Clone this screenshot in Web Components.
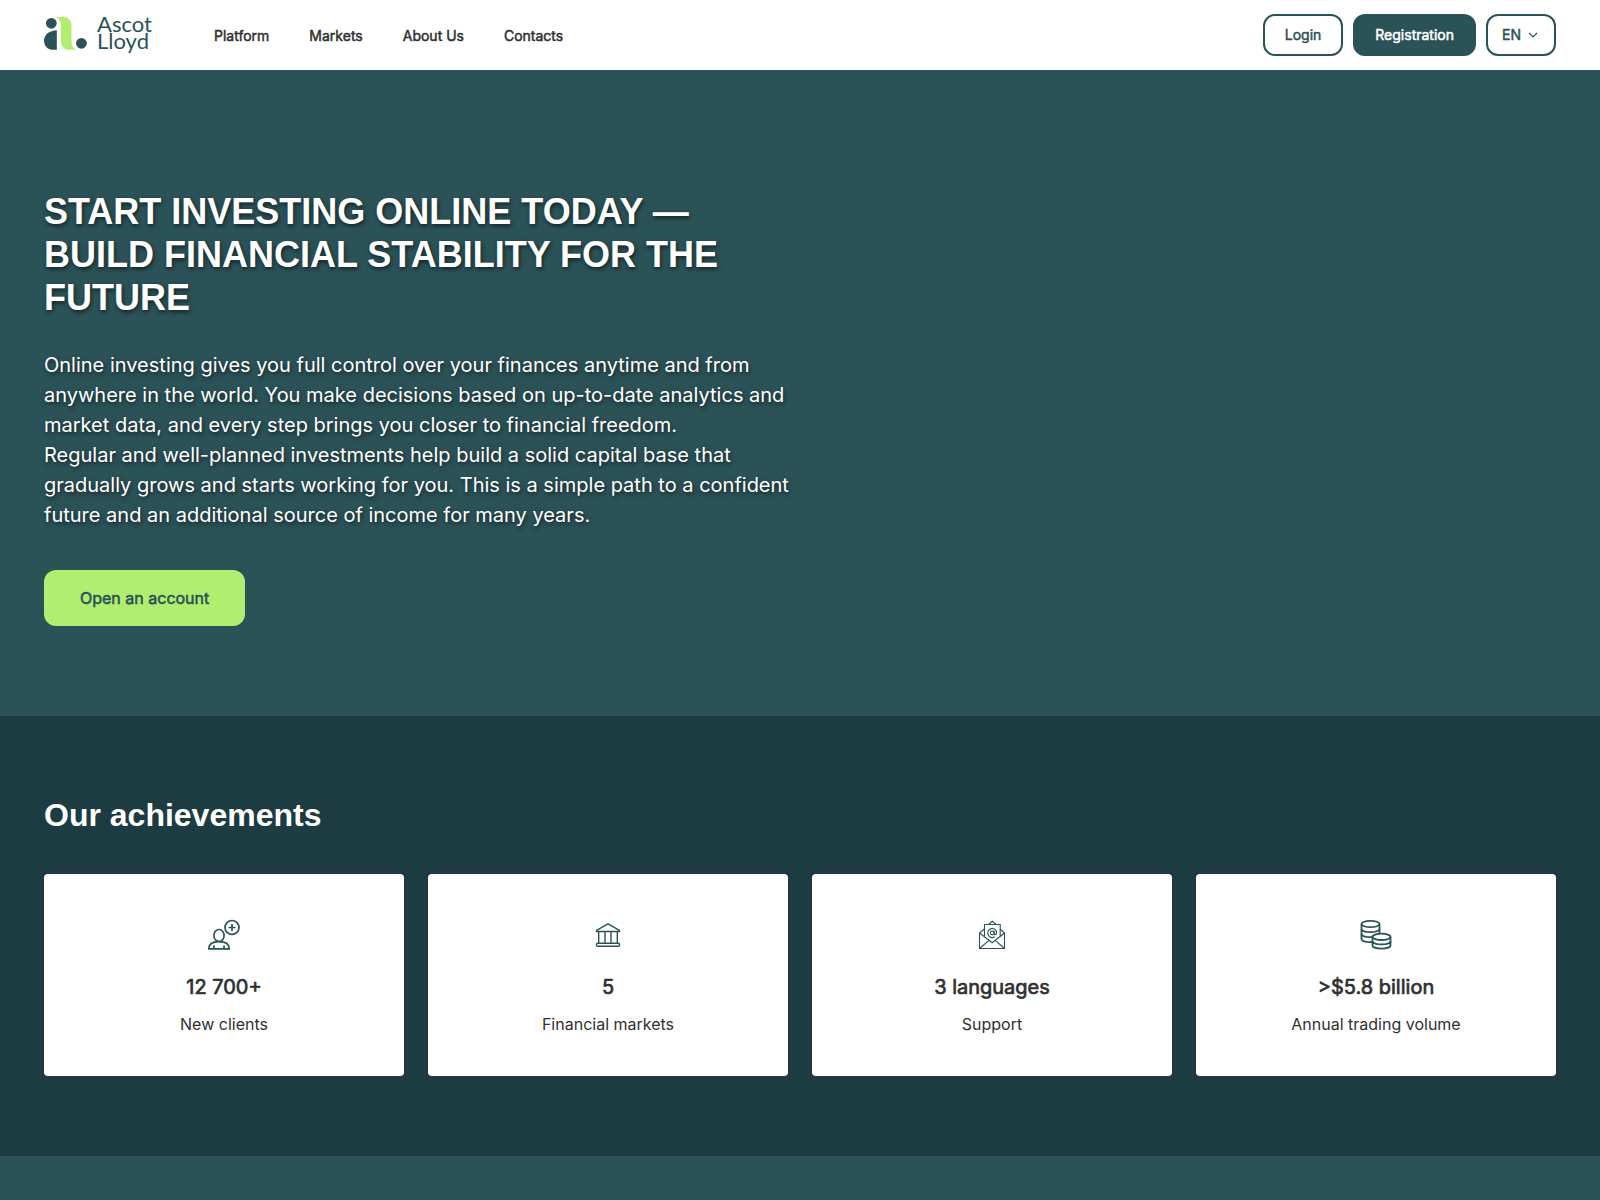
<!DOCTYPE html>
<html lang="en">
<head>
<meta charset="utf-8">
<meta name="viewport" content="width=device-width, initial-scale=1">
<title>Ascot Lloyd</title>
<style>
    :root {
        --primary: #2b5257;
        --primary-dark: #1d3c41;
        --accent: #b1ee70;
        --text: #303030;
        --side: 44px;
        --heading-font: Arial, "Liberation Sans", sans-serif;
        --bold-stroke: 0.035em currentColor; /* thickens the regular weight, keeps its widths */
    }
    body {
        margin: 0;
        min-height: 100vh;
        background: var(--primary);
        color: var(--text);
        font-family: Inter, sans-serif;
        font-size: 16px;
        line-height: 24px;
    }
</style>
</head>
<body>
<site-header>
    <nav-link href="#platform">Platform</nav-link>
    <nav-link href="#markets">Markets</nav-link>
    <nav-link href="#about">About Us</nav-link>
    <nav-link href="#contacts">Contacts</nav-link>
    <app-button slot="actions" variant="outline">Login</app-button>
    <app-button slot="actions">Registration</app-button>
    <lang-select slot="actions"></lang-select>
</site-header>

<main>
    <hero-banner>
        <span slot="title">Start investing online today — build financial stability for the future</span>
        <span>Online investing gives you full control over your finances anytime and from anywhere in the world. You make decisions based on up-to-date analytics and market data, and every step brings you closer to financial freedom.<br>Regular and well-planned investments help build a solid capital base that gradually grows and starts working for you. This is a simple path to a confident future and an additional source of income for many years.</span>
        <app-button slot="action" variant="accent">Open an account</app-button>
    </hero-banner>

    <stats-section>
        <span slot="title">Our achievements</span>
        <stat-card icon="clients" value="12 700+">New clients</stat-card>
        <stat-card icon="bank" value="5">Financial markets</stat-card>
        <stat-card icon="mail" value="3 languages">Support</stat-card>
        <stat-card icon="coins" value=">$5.8 billion">Annual trading volume</stat-card>
    </stats-section>
</main>

<script>
class SiteLogo extends HTMLElement {
    constructor() {
        super();
        this.attachShadow({ mode: 'open' });
        this.shadowRoot.innerHTML = `
            <style>
                :host { display: block; }
                a, svg { display: block; }
                svg { overflow: visible; fill: var(--primary); }
                .leaf { fill: var(--accent); }
                text { font-family: Lato, sans-serif; font-size: 22px; }
            </style>
            <a href="#" aria-label="Ascot Lloyd">
                <svg width="110" height="40" viewBox="0 0 110 40">
                    <circle cx="7.3" cy="8.3" r="5.4"/>
                    <path d="M12.8 15.2C5.5 15.8 0 19.2 0 25.6c0 5.3 3.6 9.2 8.4 9.2h4.4z"/>
                    <path class="leaf" d="M11.6 2h7.2c5.2 0 8.7 3.4 8.7 8.6v15.6c0 4.6 1.6 7.4 5 8.6h-7.4c-5 0-8.2-3.6-8.2-8.8V11.4c0-4.6-1.6-8-5.3-9.4z"/>
                    <circle cx="37.4" cy="28.3" r="5.4"/>
                    <text x="53" y="17">Ascot</text>
                    <text x="53" y="34">Lloyd</text>
                </svg>
            </a>
        `;
    }
}

class NavLink extends HTMLElement {
    constructor() {
        super();
        this.attachShadow({ mode: 'open' });
        this.shadowRoot.innerHTML = `
            <style>
                :host { display: block; }
                a {
                    color: var(--text);
                    text-decoration: none;
                    -webkit-text-stroke: var(--bold-stroke);
                }
                a:hover { color: var(--primary); }
            </style>
            <a><slot></slot></a>
        `;
    }

    connectedCallback() {
        this.shadowRoot.querySelector('a').href = this.getAttribute('href') || '#';
    }
}

class AppButton extends HTMLElement {
    constructor() {
        super();
        this.attachShadow({ mode: 'open' });
        this.shadowRoot.innerHTML = `
            <style>
                :host { display: inline-block; }
                button {
                    display: block;
                    box-sizing: border-box;
                    height: 42px;
                    padding: 0 20px;
                    border: 2px solid var(--primary);
                    border-radius: 12px;
                    background: var(--primary);
                    color: #fff;
                    font-family: inherit;
                    font-size: 14px;
                    line-height: 20px;
                    -webkit-text-stroke: var(--bold-stroke);
                    cursor: pointer;
                }
                :host([variant="outline"]) button {
                    background: #fff;
                    color: var(--primary);
                }
                :host([variant="accent"]) button {
                    height: 56px;
                    padding: 0 34px;
                    border-color: var(--accent);
                    background: var(--accent);
                    color: var(--primary);
                    font-size: 16px;
                }
            </style>
            <button type="button"><slot></slot></button>
        `;
    }
}

class LangSelect extends HTMLElement {
    constructor() {
        super();
        this.attachShadow({ mode: 'open' });
        this.shadowRoot.innerHTML = `
            <style>
                :host {
                    display: grid;
                    align-items: center;
                }
                select, svg { grid-area: 1 / 1; }
                select {
                    appearance: none;
                    box-sizing: border-box;
                    width: 70px;
                    height: 42px;
                    padding: 0 14px 2px;
                    border: 2px solid var(--primary);
                    border-radius: 12px;
                    background: #fff;
                    color: var(--primary);
                    font-family: inherit;
                    font-size: 14px;
                    -webkit-text-stroke: var(--bold-stroke);
                }
                svg {
                    justify-self: end;
                    margin-right: 18px;
                    fill: none;
                    stroke: var(--primary);
                    pointer-events: none;
                }
            </style>
            <select aria-label="Language">
                <option>EN</option>
                <option>DE</option>
                <option>FR</option>
            </select>
            <svg width="10" height="6" viewBox="0 0 10 6" stroke-width="1.2">
                <path d="M1 1l4 4 4-4"/>
            </svg>
        `;
    }
}

class SiteHeader extends HTMLElement {
    constructor() {
        super();
        this.attachShadow({ mode: 'open' });
        this.shadowRoot.innerHTML = `
            <style>
                :host { display: block; background: #fff; }
                header {
                    display: flex;
                    align-items: center;
                    gap: 60px;
                    padding: 14px var(--side);
                }
                nav {
                    display: flex;
                    gap: 40px;
                    padding-top: 2px;
                    font-size: 14px;
                }
                .actions {
                    display: flex;
                    gap: 10px;
                    margin-left: auto;
                }
            </style>
            <header>
                <site-logo></site-logo>
                <nav><slot></slot></nav>
                <div class="actions"><slot name="actions"></slot></div>
            </header>
        `;
    }
}

class HeroBanner extends HTMLElement {
    constructor() {
        super();
        this.attachShadow({ mode: 'open' });
        this.shadowRoot.innerHTML = `
            <style>
                :host {
                    display: block;
                    padding: 120px var(--side) 90px;
                    background: var(--primary);
                    color: #fff;
                }
                .content {
                    width: 50%;
                    text-shadow: 1px 2px 4px rgba(0, 0, 0, 0.6);
                }
                h1 {
                    margin: 0 0 31px;
                    font-family: var(--heading-font);
                    font-size: 36px;
                    line-height: 43px;
                    text-transform: uppercase;
                }
                p {
                    margin: 0 0 40px;
                    font-size: 20px;
                    line-height: 30px;
                }
            </style>
            <div class="content">
                <h1><slot name="title"></slot></h1>
                <p><slot></slot></p>
            </div>
            <slot name="action"></slot>
        `;
    }
}

class StatsSection extends HTMLElement {
    constructor() {
        super();
        this.attachShadow({ mode: 'open' });
        this.shadowRoot.innerHTML = `
            <style>
                :host {
                    display: block;
                    padding: 80px var(--side);
                    background: var(--primary-dark);
                }
                h2 {
                    margin: 0 0 40px;
                    color: #fff;
                    font-family: var(--heading-font);
                    font-size: 32px;
                    line-height: 38px;
                }
                .grid {
                    display: grid;
                    grid-template-columns: repeat(4, 1fr);
                    gap: 24px;
                }
            </style>
            <h2><slot name="title"></slot></h2>
            <div class="grid"><slot></slot></div>
        `;
    }
}

const statIcons = {
    clients: `
        <g stroke-width="1.7">
            <circle cx="28" cy="13.5" r="7"/>
            <path d="M28 10.1v6.8M24.6 13.5h6.8"/>
            <ellipse cx="15" cy="21.5" rx="5.1" ry="6"/>
            <path d="M4.7 34.9c0-4.3 3.5-7.3 10.3-7.3s10.3 3 10.3 7.3z"/>
            <path d="M10 31.5v3.4M20 31.5v3.4"/>
        </g>`,
    bank: `
        <g stroke-width="1.4">
            <path d="M8.5 17.5v-1L20 9.8l11.5 6.7v1z"/>
            <path d="M10.7 17.5V29M17 17.5V29M23 17.5V29M29.3 17.5V29"/>
            <rect x="8.5" y="29.3" width="23" height="3" rx="1"/>
        </g>`,
    mail: `
        <g stroke-width="1.1">
            <path d="M12.5 15l-5 4v15.5h25V19L28 15"/>
            <path d="M16.500 10.5l3.800-3.200 3.800 3.200"/>
            <path d="M12.5 22.5v-12h15.700v12"/>
            <path d="M7.500 19l12.700 9.800L32.500 19"/>
            <path d="M7.500 34.500l9.500-8.200M32.500 34.500l-9.300-8.200"/>
            <circle cx="20.3" cy="19" r="1.9"/>
            <path d="M22.200 17v2.600c0 1.700 2.500 1.400 2.500-.6a4.500 4.500 0 1 0-2 3.800"/>
        </g>`,
    coins: `
        <g stroke-width="1.8">
            <ellipse cx="14.5" cy="10" rx="9" ry="3.2"/>
            <path d="M5.5 10v15c0 1.8 4 3.2 9 3.2h1.8M23.5 10v9.5"/>
            <path d="M5.5 15c0 1.8 4 3.2 9 3.2s9-1.4 9-3.2M5.5 20c0 1.8 4 3.2 9 3.2h1.8"/>
            <ellipse cx="25.5" cy="22.8" rx="9" ry="3.2"/>
            <path d="M16.5 22.8v8.6c0 1.8 4 3.2 9 3.2s9-1.4 9-3.2v-8.6"/>
            <path d="M16.5 27.2c0 1.8 4 3.2 9 3.2s9-1.4 9-3.2"/>
        </g>`
};

class StatCard extends HTMLElement {
    constructor() {
        super();
        this.attachShadow({ mode: 'open' });
        this.shadowRoot.innerHTML = `
            <style>
                :host {
                    display: flex;
                    flex-direction: column;
                    align-items: center;
                    padding: 40px 20px;
                    border-radius: 4px;
                    background: #fff;
                    text-align: center;
                }
                svg {
                    fill: none;
                    stroke: var(--primary);
                }
                .value {
                    margin: 18px 0 10px;
                    font-size: 20px;
                    line-height: 30px;
                    -webkit-text-stroke: var(--bold-stroke);
                }
            </style>
            <svg width="40" height="40" viewBox="0 0 40 40"></svg>
            <div class="value"></div>
            <div><slot></slot></div>
        `;
    }

    connectedCallback() {
        this.shadowRoot.querySelector('svg').innerHTML = statIcons[this.getAttribute('icon')] || '';
        this.shadowRoot.querySelector('.value').textContent = this.getAttribute('value');
    }
}

customElements.define('site-logo', SiteLogo);
customElements.define('nav-link', NavLink);
customElements.define('app-button', AppButton);
customElements.define('lang-select', LangSelect);
customElements.define('site-header', SiteHeader);
customElements.define('hero-banner', HeroBanner);
customElements.define('stats-section', StatsSection);
customElements.define('stat-card', StatCard);
</script>
</body>
</html>
